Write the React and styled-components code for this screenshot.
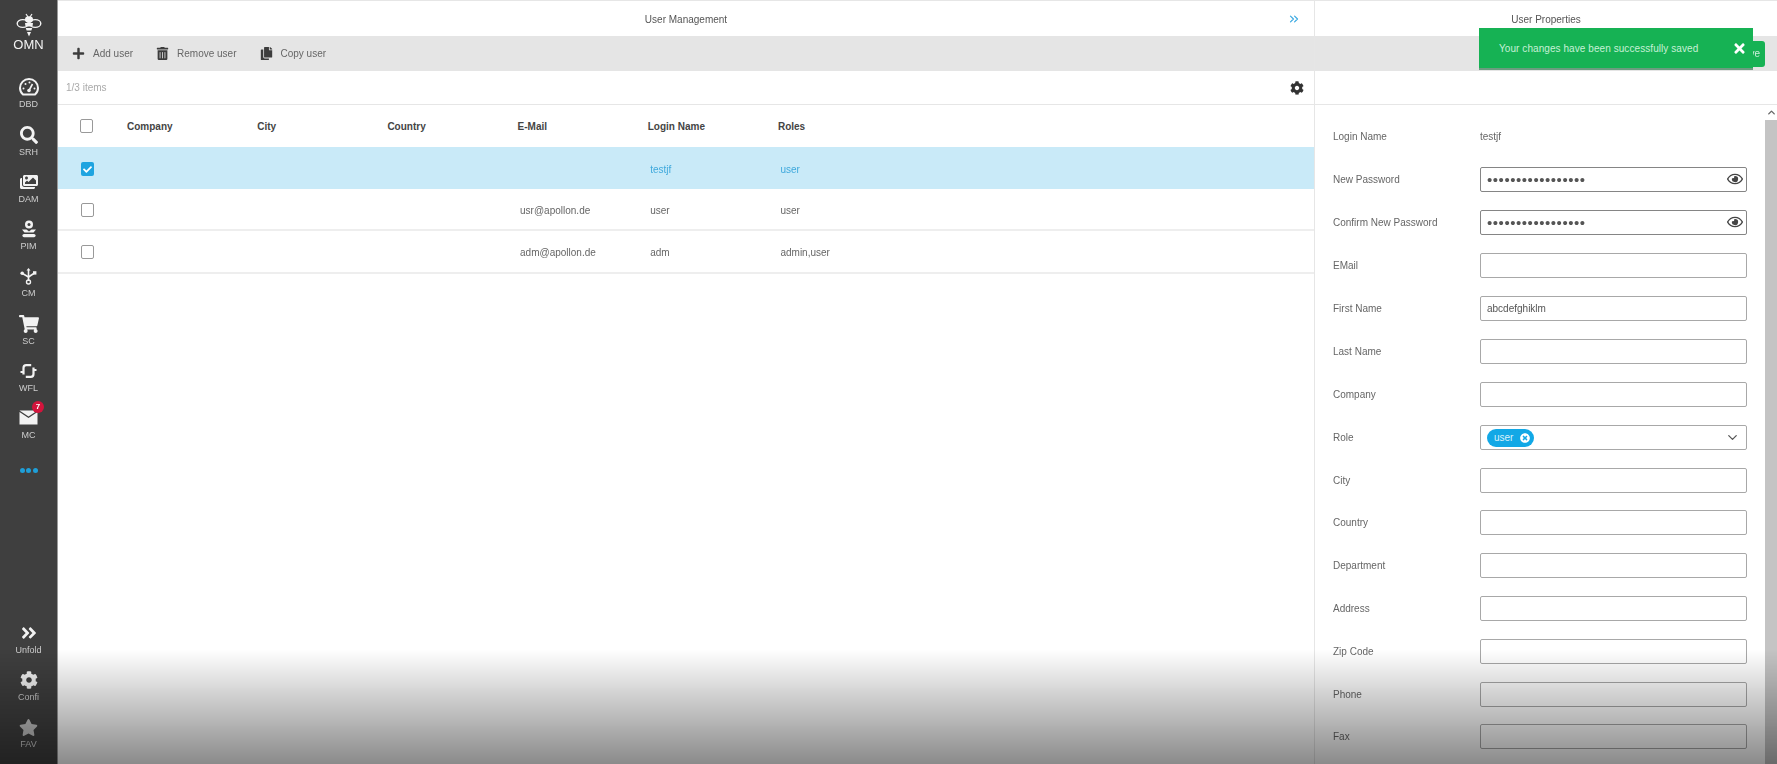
import React from 'react';
import styled, { createGlobalStyle } from 'styled-components';
import { FaSearch, FaImages, FaShoppingCart, FaCog, FaStar, FaAngleDoubleRight, FaTrashAlt, FaCopy, FaPlus, FaRegEye, FaTimes, FaCheck, FaTimesCircle } from 'react-icons/fa';
import { ChevronDown, ChevronUp, ChevronsRight } from 'lucide-react';

const GlobalStyle = createGlobalStyle`
  html, body {
    margin: 0;
    padding: 0;
    height: 100%;
    overflow: hidden;
    background: #fff;
  }
  * { box-sizing: border-box; }
  body {
    font-family: "Liberation Sans", Arial, sans-serif;
    font-size: 10px;
    color: #666;
  }
`;

const Page = styled.div`
  position: relative;
  display: flex;
  width: 1777px;
  height: 764px;
  overflow: hidden;
  filter: blur(0.45px);
`;

const Vignette = styled.div`
  position: absolute;
  left: 0;
  right: 0;
  bottom: 0;
  height: 114px;
  pointer-events: none;
  background: linear-gradient(to bottom, rgba(0,0,0,0), rgba(0,0,0,0.46));
`;

const Sidebar = styled.nav`
  flex: 0 0 58px;
  display: flex;
  flex-direction: column;
  justify-content: space-between;
  background: #3f3f3f;
  border-right: 1px solid #9a9a9a;
  padding-bottom: 10px;
`;

const SideGroup = styled.div`
  display: flex;
  flex-direction: column;
`;

const Logo = styled.div`
  height: 67px;
  display: flex;
  flex-direction: column;
  align-items: center;
  padding-top: 13px;
  color: #f4f4f4;
  font-size: 13px;
  line-height: 14px;
`;

const SideItem = styled.div`
  position: relative;
  height: 47.25px;
  display: flex;
  flex-direction: column;
  align-items: center;
  justify-content: flex-end;
  padding-bottom: 4px;
  color: #f2f2f2;
`;

const SideIcon = styled.div`
  height: 20px;
  margin-bottom: 1px;
  display: flex;
  align-items: center;
  justify-content: center;
`;

const SideLabel = styled.span`
  font-size: 9px;
  line-height: 12px;
  color: #cdcdcd;
`;

const Badge = styled.span`
  position: absolute;
  top: 3px;
  left: 32px;
  width: 12px;
  height: 12px;
  border-radius: 50%;
  background: #d3143c;
  color: #fff;
  font-size: 8px;
  font-weight: bold;
  line-height: 12px;
  text-align: center;
`;

const MoreDots = styled.div`
  height: 50px;
  display: flex;
  align-items: center;
  justify-content: center;
  gap: 1.5px;
`;

const Dot = styled.span`
  width: 5px;
  height: 5px;
  border-radius: 50%;
  background: #1f9fd8;
`;

const Main = styled.div`
  flex: 1;
  display: flex;
  min-width: 0;
`;

const Panel = styled.section`
  display: flex;
  flex-direction: column;
  width: ${p => p.$width}px;
  border-right: ${p => (p.$divider ? '1px solid #e6e6e6' : 'none')};
  border-top: 1px solid #e6e6e6;
`;

const PanelTitle = styled.header`
  position: relative;
  height: 35px;
  padding-top: 2px;
  display: flex;
  align-items: center;
  justify-content: center;
  color: #555;
`;

const CollapseButton = styled.span`
  position: absolute;
  right: 13px;
  top: 11px;
  display: flex;
  color: #3aa9e2;
`;

const Toolbar = styled.div`
  height: 35px;
  display: flex;
  align-items: center;
  justify-content: ${p => (p.$end ? 'flex-end' : 'flex-start')};
  gap: 23px;
  padding: ${p => (p.$end ? '0 12px 0 0' : '0 0 0 14px')};
  background: #e5e5e5;
`;

const ToolButton = styled.span`
  display: flex;
  align-items: center;
  gap: 8px;
  color: #666;
  svg { color: #3c3c3c; }
`;

const SaveButton = styled.span`
  width: 70px;
  height: 26px;
  padding-right: 5px;
  border-radius: 3px;
  background: #16b254;
  color: #cfeedd;
  line-height: 26px;
  text-align: right;
`;

const InfoBar = styled.div`
  height: 34px;
  display: flex;
  align-items: center;
  justify-content: space-between;
  padding: 0 10px 0 8px;
  color: #aaa;
  border-bottom: 1px solid #e6e6e6;
  svg { color: #333; }
`;

const TableRow = styled.div`
  display: grid;
  grid-template-columns: 69px repeat(6, 130.2px);
  align-items: center;
  height: ${p => (p.$head ? 42 : 42.2)}px;
  padding-top: ${p => (p.$head ? 0 : 2)}px;
  background: ${p => (p.$selected ? '#c9eaf8' : '#fff')};
  border-bottom: ${p => (p.$selected || p.$head ? 'none' : '2px solid #eee')};
  color: ${p => (p.$selected ? '#3fa9dc' : '#666')};
`;

const HeadCell = styled.span`
  font-weight: bold;
  color: #444;
`;

const Cell = styled.span`
  padding-left: 2.5px;
`;

const CheckSlot = styled.div`
  padding-left: ${p => (p.$head ? 22 : 23)}px;
`;

const CheckBox = styled.span`
  display: flex;
  align-items: center;
  justify-content: center;
  width: 13px;
  height: 14px;
  border-radius: 2px;
  border: ${p => (p.$checked ? 'none' : '1px solid #999')};
  background: ${p => (p.$checked ? '#1fa4e0' : '#fff')};
  color: #fff;
`;

const RightBody = styled.div`
  flex: 1;
  display: flex;
  min-height: 0;
`;

const Form = styled.div`
  flex: 1;
  display: flex;
  flex-direction: column;
  padding: 10px 18px 0 18px;
`;

// the rows in the reference are not quite evenly spaced
const FormRow = styled.div`
  flex: 0 0 auto;
  height: 42.9px;
  display: grid;
  grid-template-columns: 147px 267px;
  align-items: center;
  color: #666;
  &:nth-child(n+4):nth-child(-n+7) { height: 43.2px; }
  &:nth-child(n+8):nth-child(-n+11) { height: 42.6px; }
`;

const FieldBox = styled.div`
  position: relative;
  height: 25px;
  display: flex;
  align-items: center;
  padding: ${p => (p.$focus ? '0 3px 0 6px' : '0 6px')};
  border: 1.5px solid ${p => (p.$focus ? '#858585' : '#a8a8a8')};
  border-radius: 2px;
  background: #fff;
  color: #555;
`;

const FieldInput = styled.input`
  flex: 1;
  min-width: 0;
  border: none;
  outline: none;
  padding: 0;
  background: transparent;
  color: #555;
  font-family: inherit;
  font-size: ${p => (p.type === 'password' ? 15 : 10)}px;
  letter-spacing: ${p => (p.type === 'password' ? '0.55px' : '0')};
`;

const Tag = styled.span`
  display: flex;
  align-items: center;
  gap: 7px;
  height: 18px;
  padding: 0 4px 0 7px;
  border-radius: 9px;
  background: #12a8e6;
  color: #d8f1fb;
  svg { color: #fff; }
`;

const SelectArrow = styled.span`
  margin-left: auto;
  display: flex;
  color: #555;
`;

const ScrollTrack = styled.div`
  flex: 0 0 12px;
  display: flex;
  flex-direction: column;
`;

const ScrollArrow = styled.div`
  height: 15px;
  display: flex;
  align-items: center;
  justify-content: center;
  color: #666;
`;

const ScrollThumb = styled.div`
  flex: 1;
  background: #c4c4c4;
`;

const Toast = styled.div`
  position: absolute;
  top: 28px;
  left: 1479px;
  width: 274px;
  height: 42px;
  display: flex;
  align-items: center;
  justify-content: space-between;
  padding: 0 6px 0 20px;
  background: #16b254;
  border-bottom: 2px solid #6b9c7f;
  color: #c6f0d6;
  letter-spacing: 0.07px;
  svg { color: #fff; }
`;

const BeeLogo = () => (
  <svg width="26" height="25" viewBox="0 0 26 25" fill="none">
    <path d="M10 1l2 3M16 1l-2 3" stroke="#f4f4f4" strokeWidth="1.200" />
    <ellipse cx="13" cy="6.500" rx="4" ry="3.200" fill="#f4f4f4" />
    <ellipse cx="6.800" cy="10.500" rx="5.600" ry="3.900" stroke="#f4f4f4" strokeWidth="1.400" />
    <ellipse cx="19.200" cy="10.500" rx="5.600" ry="3.900" stroke="#f4f4f4" strokeWidth="1.400" />
    <path d="M9 10h8l-.5 3.500h-7zM9.800 15h6.400l-.8 2.500h-4.800zM11 19h4l-2 4.500z" fill="#f4f4f4" />
  </svg>
);

const GaugeIcon = () => (
  <svg width="20" height="18" viewBox="0 0 20 18" fill="none">
    <path d="M4 16.500C2.300 15 1 12.700 1 10a9 9 0 0 1 18 0c0 2.700-1.300 5-3 6.500z" stroke="#f2f2f2" strokeWidth="2" />
    <path d="M10 12.500L13.500 6" stroke="#f2f2f2" strokeWidth="1.600" />
    <circle cx="10" cy="12.500" r="1.800" fill="#f2f2f2" />
    <circle cx="4.500" cy="10.500" r="1" fill="#f2f2f2" />
    <circle cx="6.500" cy="6" r="1" fill="#f2f2f2" />
    <circle cx="10.500" cy="4.500" r="1" fill="#f2f2f2" />
    <circle cx="15.500" cy="10.500" r="1" fill="#f2f2f2" />
  </svg>
);

const PimIcon = () => (
  <svg width="18" height="18" viewBox="0 0 18 18" fill="#f2f2f2">
    <circle cx="9" cy="4.500" r="4" />
    <circle cx="9" cy="4.500" r="1.500" fill="#3f3f3f" />
    <path d="M2 9.500h4.500L9 11.500l2.500-2H16l-2.500 3h-9z" />
    <path d="M4 14h10a1 1 0 0 1 0 3.200H4A1 1 0 0 1 4 14z" />
  </svg>
);

const HubIcon = () => (
  <svg width="17" height="17" viewBox="0 0 17 17" fill="none" stroke="#f2f2f2">
    <path d="M8.500 2v11" strokeWidth="1.600" />
    <path d="M2.500 5.500L8.500 9M14.500 5L8.500 9" strokeWidth="1.600" />
    <path d="M8.500 0l2 2.500h-4z" fill="#f2f2f2" stroke="none" />
    <circle cx="2.200" cy="5.200" r="1.800" fill="#f2f2f2" stroke="none" />
    <rect x="13" y="3.200" width="3.400" height="3.400" fill="#f2f2f2" stroke="none" />
    <circle cx="8.500" cy="14" r="2" strokeWidth="1.400" />
  </svg>
);

const WorkflowIcon = () => (
  <svg width="17" height="14" viewBox="0 0 17 14" fill="none" stroke="#f2f2f2" strokeWidth="2.200">
    <path d="M3.500 10.500V4c0-1.700.9-2.900 2.700-2.900h5" />
    <path d="M13.500 3.500V10c0 1.700-.9 2.900-2.700 2.900h-5" />
    <path d="M0.500 8h3M13.500 6h3" strokeWidth="1.800" />
  </svg>
);

const MailIcon = () => (
  <svg width="19" height="17" viewBox="0 0 19 17">
    <path d="M0.500 0.500h18L9.500 6.500z" fill="#f2f2f2" />
    <path d="M0.500 2v12.500h18V2L9.500 8z" fill="#f2f2f2" />
  </svg>
);

const topItems = [
  { label: 'DBD', icon: <GaugeIcon /> },
  { label: 'SRH', icon: <FaSearch size={18} /> },
  { label: 'DAM', icon: <FaImages size={18} /> },
  { label: 'PIM', icon: <PimIcon /> },
  { label: 'CM', icon: <HubIcon /> },
  { label: 'SC', icon: <FaShoppingCart size={20} /> },
  { label: 'WFL', icon: <WorkflowIcon /> },
  { label: 'MC', icon: <MailIcon />, badge: 7 },
];

const bottomItems = [
  { label: 'Unfold', icon: <FaAngleDoubleRight size={18} /> },
  { label: 'Confi', icon: <FaCog size={18} /> },
  { label: 'FAV', icon: <FaStar size={19} color="#c4c4c4" /> },
];

const columns = ['Company', 'City', 'Country', 'E-Mail', 'Login Name', 'Roles'];

const users = [
  { email: '', login: 'testjf', roles: 'user', selected: true },
  { email: 'usr@apollon.de', login: 'user', roles: 'user' },
  { email: 'adm@apollon.de', login: 'adm', roles: 'admin,user' },
];

const lowerFields = ['City', 'Country', 'Department', 'Address', 'Zip Code', 'Phone', 'Fax'];

const SideEntry = ({ item }) => (
  <SideItem>
    {item.badge && <Badge>{item.badge}</Badge>}
    <SideIcon>{item.icon}</SideIcon>
    <SideLabel>{item.label}</SideLabel>
  </SideItem>
);

const PasswordRow = ({ label }) => (
  <FormRow>
    <span>{label}</span>
    <FieldBox $focus>
      <FieldInput type="password" defaultValue="abcdefghijklmnopq" readOnly />
      <FaRegEye size={16} color="#444" />
    </FieldBox>
  </FormRow>
);

const TextRow = ({ label, value }) => (
  <FormRow>
    <span>{label}</span>
    <FieldBox>
      <FieldInput defaultValue={value} readOnly />
    </FieldBox>
  </FormRow>
);

const App = () => {
  return (
    <Page>
      <GlobalStyle />
      <Sidebar>
        <SideGroup>
          <Logo>
            <BeeLogo />
            OMN
          </Logo>
          {topItems.map(item => <SideEntry key={item.label} item={item} />)}
          <MoreDots>
            <Dot /><Dot /><Dot />
          </MoreDots>
        </SideGroup>
        <SideGroup>
          {bottomItems.map(item => <SideEntry key={item.label} item={item} />)}
        </SideGroup>
      </Sidebar>

      <Main>
        <Panel $width={1257} $divider>
          <PanelTitle>
            User Management
            <CollapseButton><ChevronsRight size={14} strokeWidth={2} /></CollapseButton>
          </PanelTitle>
          <Toolbar>
            <ToolButton><FaPlus size={13} />Add user</ToolButton>
            <ToolButton><FaTrashAlt size={13} />Remove user</ToolButton>
            <ToolButton><FaCopy size={13} />Copy user</ToolButton>
          </Toolbar>
          <InfoBar>
            1/3 items
            <FaCog size={14} />
          </InfoBar>
          <TableRow $head>
            <CheckSlot $head><CheckBox /></CheckSlot>
            {columns.map(col => <HeadCell key={col}>{col}</HeadCell>)}
          </TableRow>
          {users.map(user => (
            <TableRow key={user.login} $selected={user.selected}>
              <CheckSlot>
                <CheckBox $checked={user.selected}>
                  {user.selected && <FaCheck size={9} />}
                </CheckBox>
              </CheckSlot>
              <Cell />
              <Cell />
              <Cell />
              <Cell>{user.email}</Cell>
              <Cell>{user.login}</Cell>
              <Cell>{user.roles}</Cell>
            </TableRow>
          ))}
        </Panel>

        <Panel $width={462}>
          <PanelTitle>User Properties</PanelTitle>
          <Toolbar $end>
            <SaveButton>Save</SaveButton>
          </Toolbar>
          <InfoBar />
          <RightBody>
            <Form>
              <FormRow>
                <span>Login Name</span>
                <span>testjf</span>
              </FormRow>
              <PasswordRow label="New Password" />
              <PasswordRow label="Confirm New Password" />
              <TextRow label="EMail" />
              <TextRow label="First Name" value="abcdefghiklm" />
              <TextRow label="Last Name" />
              <TextRow label="Company" />
              <FormRow>
                <span>Role</span>
                <FieldBox>
                  <Tag>user<FaTimesCircle size={10} /></Tag>
                  <SelectArrow><ChevronDown size={15} /></SelectArrow>
                </FieldBox>
              </FormRow>
              {lowerFields.map(label => <TextRow key={label} label={label} />)}
            </Form>
            <ScrollTrack>
              <ScrollArrow><ChevronUp size={11} strokeWidth={3} /></ScrollArrow>
              <ScrollThumb />
            </ScrollTrack>
          </RightBody>
        </Panel>
      </Main>

      <Toast>
        Your changes have been successfully saved
        <FaTimes size={15} />
      </Toast>
      <Vignette />
    </Page>
  );
};

export default App;
